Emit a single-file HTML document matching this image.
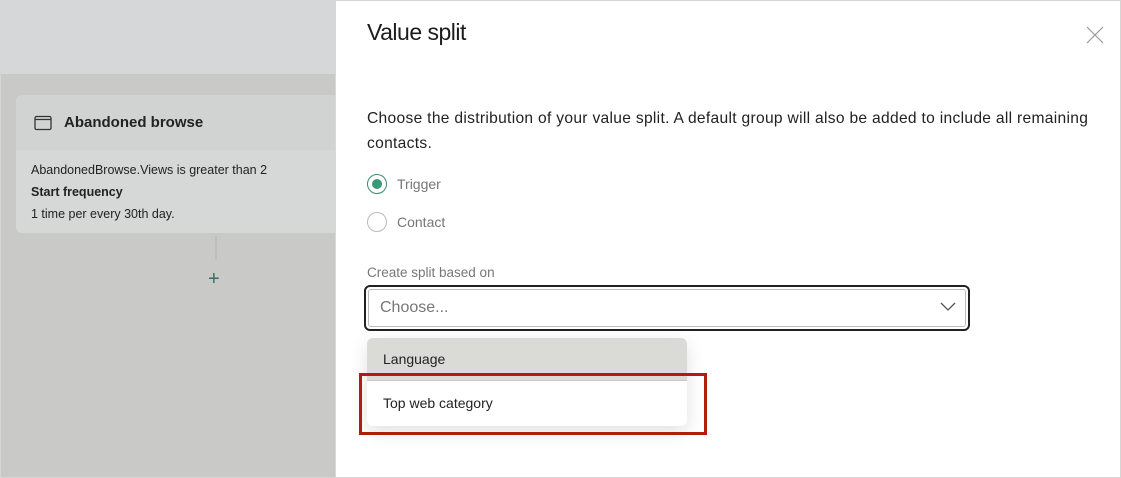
<!DOCTYPE html>
<html><head><style>
*{margin:0;padding:0;box-sizing:border-box}
body{width:1121px;height:478px;overflow:hidden;font-family:"Liberation Sans",sans-serif;background:#fff;position:relative;color:#222}
.frame{position:absolute;left:0;top:0;width:1121px;height:478px;border:1px solid #d6d6d4;pointer-events:none;z-index:10}
.lt{position:absolute;left:0;top:0;width:335px;height:74px;background:#d6d7d9}
.lb{position:absolute;left:0;top:74px;width:335px;height:404px;background:#c9cac8}
.card{position:absolute;left:16px;top:95px;width:319px;height:138px;background:#d6d7d7;border-radius:6px 0 0 6px;overflow:hidden}
.ch{height:55px;background:#d1d2d2;display:flex;align-items:center;padding-left:18px;font-size:15px;font-weight:bold;color:#222}
.cb{padding:9px 15px;font-size:12.5px;line-height:22px;color:#222}
.r{position:absolute;left:367px;font-size:15px}
.radio{position:absolute;left:367px;width:20px;height:20px;border-radius:50%;border:1.5px solid #bbb}
</style></head><body>
<div class="lt"></div><div class="lb"></div>
<div class="card">
<div class="ch"><svg width="18" height="16" style="margin-right:12px"><rect x="1" y="1.5" width="16" height="13" rx="1.5" fill="none" stroke="#333" stroke-width="1.3"/><line x1="1" y1="4.5" x2="17" y2="4.5" stroke="#333" stroke-width="1.3"/></svg>Abandoned browse</div>
<div class="cb">AbandonedBrowse.Views is greater than 2<br><b>Start frequency</b><br>1 time per every 30th day.</div>
</div>
<div style="position:absolute;left:215px;top:236px;width:2px;height:24px;background:#bdbebd"></div>
<div style="position:absolute;left:208px;top:268px;font-size:20px;color:#3d6b68">+</div>
<div style="position:absolute;left:367px;top:19px;font-size:23px;letter-spacing:-0.5px;color:#1c1c1c">Value split</div>
<svg style="position:absolute;left:1086px;top:26px" width="18" height="18"><path d="M1 1L17 17M17 1L1 17" stroke="#999" stroke-width="1.2"/></svg>
<div style="position:absolute;left:367px;top:106px;width:740px;font-size:15.6px;letter-spacing:0.3px;line-height:25px;color:#222">Choose the distribution of your value split. A default group will also be added to include all remaining contacts.</div>
<div class="radio" style="top:174px;border-color:#3a8a70"><div style="margin:3.5px;width:10px;height:10px;border-radius:50%;background:#3a9a78"></div></div>
<div class="r" style="left:397px;top:176px;font-size:14px;color:#777">Trigger</div>
<div class="radio" style="top:212px"></div>
<div class="r" style="left:397px;top:214px;font-size:14px;color:#777">Contact</div>
<div style="position:absolute;left:367px;top:265px;font-size:13.5px;color:#777">Create split based on</div>
<div style="position:absolute;left:364px;top:285px;width:606px;height:46px;border:2px solid #222;border-radius:6px;padding:2px"><div style="height:100%;border:1px solid #bbb;border-radius:3px;padding-left:11px;line-height:36px;font-size:16px;color:#777">Choose...</div></div>
<svg style="position:absolute;left:940px;top:302px" width="16" height="10"><path d="M1 1L8 8L15 1" fill="none" stroke="#555" stroke-width="1.3"/></svg>
<div style="position:absolute;left:367px;top:338px;width:320px;height:88px;border-radius:6px;overflow:hidden;box-shadow:0 6px 18px rgba(0,0,0,.12)">
<div style="height:43px;background:#dadad7;padding-left:16px;line-height:42px;font-size:14px;border-bottom:1px solid #c8c8c6">Language</div>
<div style="height:45px;background:#fff;padding-left:16px;line-height:44px;font-size:14px">Top web category</div>
</div>
<div style="position:absolute;left:359px;top:373px;width:348px;height:62px;border:3px solid #b11c0e"></div>
<div style="position:absolute;left:335px;top:0;width:1px;height:478px;background:#d8d8d6"></div>
<div class="frame"></div>
</body></html>
